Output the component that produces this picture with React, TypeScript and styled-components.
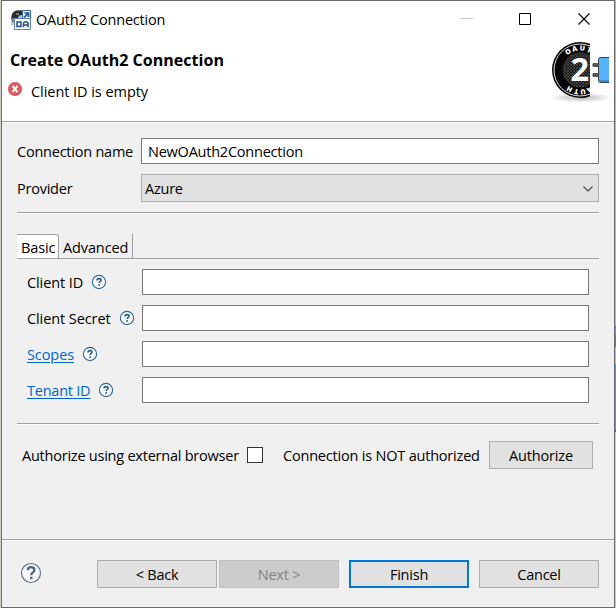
import React from 'react';
import styled, { createGlobalStyle } from 'styled-components';

const GlobalStyle = createGlobalStyle`
  * { box-sizing: border-box; }
  body {
    margin: 0;
    overflow: hidden;
    font: 14.5px/20px "Open Sans", "Noto Sans", sans-serif;
    letter-spacing: -0.23px;
    color: #000;
  }
  input, button { font: inherit; letter-spacing: inherit; color: inherit; border-radius: 0; margin: 0; outline: none; }
`;

const Desktop = styled.div`
  width: 616px;
  height: 608px;
  padding: 0 1px;
  background:
    linear-gradient(#b9b8b3 0 326px, #45608a 326px 327px, #6795cc 327px 335px, #777 335px 347px, #b9b8b3 347px 364px, #5d8fcc 364px 431px, #3d5470 431px 432px, #c9c8c3 432px) right / 1px 100% no-repeat,
    #d4d1c9;
`;

const Window = styled.main`
  display: flex;
  flex-direction: column;
  height: 608px;
  border: 1px solid #6b6b6b;
  background: #f0f0f0;
`;

const TitleBar = styled.header`
  display: flex;
  align-items: center;
  height: 37px;
  padding: 0 23px 0 9px;
  background: #fff;
`;

const Title = styled.span`
  margin-left: 5px;
  letter-spacing: -0.2px;
`;

const WindowControls = styled.div`
  display: flex;
  gap: 46px;
  margin-left: auto;
  svg { display: block; }
`;

const Banner = styled.section`
  display: flex;
  justify-content: space-between;
  height: 83px;
  padding: 0 2px 0 6px;
  background: #fff;
`;

const Heading = styled.h1`
  margin: 12px 0 0 2px;
  font-size: 16px;
  line-height: 20px;
  font-weight: 700;
  letter-spacing: 0.03px;
`;

const Message = styled.div`
  display: flex;
  align-items: center;
  gap: 9px;
  margin-top: 12px;
  letter-spacing: -0.05px;
  svg { margin-top: -6px; }
`;

const Rule = styled.hr<{ $top?: number }>`
  flex: none;
  width: 100%;
  height: 2px;
  margin: ${({ $top = 0 }) => $top}px 0 0;
  border: 0;
  border-top: 1px solid #a0a0a0;
  border-bottom: 1px solid #fff;
`;

const Content = styled.div`
  flex: 1;
  padding: 15px 15px 0;
`;

const Form = styled.div<{ $label: number }>`
  display: grid;
  grid-template-columns: ${({ $label }) => $label}px 1fr;
  row-gap: 10px;
  align-items: center;
`;

const Input = styled.input`
  width: 100%;
  height: 26px;
  padding: 0 6px;
  border: 1px solid #7a7a7a;
  background: #fff;
`;

const Select = styled.div`
  display: flex;
  align-items: center;
  justify-content: space-between;
  height: 28px;
  padding: 1px 5px 0 3px;
  border: 1px solid #adadad;
  background: #e1e1e1;
`;

const Tabs = styled.div`
  display: flex;
  height: 25px;
  margin-top: 20px;
  border-bottom: 1px solid #a0a0a0;
`;

const Tab = styled.div<{ $active?: boolean }>`
  width: ${({ $active }) => ($active ? 42 : 74)}px;
  height: 24px;
  padding: 4px 0 0 4px;
  white-space: nowrap;
  letter-spacing: -0.12px;
  border-right: 1px solid #a0a0a0;
  ${({ $active }) => $active && 'border-top: 1px solid #a0a0a0; border-top-right-radius: 3px; background: #fff; padding-top: 3px;'}
`;

const TabPanel = styled.div`
  padding: 10px 10px 0;
`;

const Label = styled.label`
  display: flex;
  align-items: center;
  gap: 8px;
  padding-top: 1px;
  white-space: nowrap;
  svg { margin-top: -2px; }
  ${TabPanel} & { letter-spacing: -0.09px; }
`;

const Link = styled.a`
  color: #0066cc;
  text-decoration: underline;
  text-underline-offset: 2px;
`;

const TightLink = styled(Link)`
  letter-spacing: -0.23px;
`;

const AuthorizeRow = styled.div`
  display: flex;
  align-items: center;
  margin-top: 16px;
  padding: 0 6px 0 5px;
  white-space: nowrap;
`;

const CheckLabel = styled.span`
  width: 225px;
  padding-top: 2px;
`;

const Status = styled.span`
  padding-top: 2px;
  letter-spacing: -0.2px;
`;

const CheckBox = styled.span`
  width: 16px;
  height: 16px;
  margin-right: 20px;
  border: 1px solid #333;
  background: #fff;
`;

const Button = styled.button<{ $width: number; $primary?: boolean }>`
  width: ${({ $width }) => $width}px;
  height: 28px;
  padding: 1px 0 0;
  border: ${({ $primary }) => ($primary ? '2px solid #0078d7' : '1px solid #adadad')};
  background: #e1e1e1;
  line-height: 20px;
  &:disabled { border-color: #bfbfbf; background: #ccc; color: #838383; }
`;

const AuthorizeButton = styled(Button)`
  margin-left: auto;
  letter-spacing: -0.15px;
`;

const Footer = styled.footer`
  display: flex;
  align-items: flex-start;
  justify-content: space-between;
  height: 66px;
  padding: 19px 15px 0 18px;
  > svg { margin-top: 2px; }
`;

const Buttons = styled.div`
  display: flex;
  gap: 10px;
`;

const Pair = styled.div`
  display: flex;
  gap: 2px;
`;

const HelpIcon = () => (
  <svg width="16" height="16" viewBox="0 0 16 16" fill="none">
    <circle cx="8" cy="8" r="6.6" fill="#fafcff" stroke="#2f6699" strokeWidth="1.1" />
    <path d="M6 6.5C6 5.2 6.8 4.6 8 4.6s2 .6 2 1.6c0 1.3-1.8 1.3-1.8 2.9" stroke="#245d94" strokeWidth="1.6" />
    <path d="M7.3 10.2h1.8v1.6H7.3z" fill="#245d94" />
  </svg>
);

const LargeHelpIcon = () => (
  <svg width="22" height="22" viewBox="0 0 22 22" fill="none">
    <circle cx="11" cy="11" r="9.5" fill="#f7f8fa" stroke="#64728f" strokeWidth="1.2" />
    <path d="M7.8 8.2C7.8 6 9.2 5.1 11.1 5.1s3.3 1 3.3 2.8c0 2.6-3.2 2.4-3.2 5.3" stroke="#526486" strokeWidth="2.3" />
    <path d="M10 14.8h2.5v2.4H10z" fill="#526486" />
  </svg>
);

const ErrorIcon = () => (
  <svg width="14" height="14" viewBox="0 0 14 14">
    <circle cx="7" cy="7" r="6.7" fill="#dc5a5e" stroke="#c8494e" strokeWidth=".6" />
    <path d="M4.5 3.8l5 6.4M9.5 3.8l-5 6.4" stroke="#fff" strokeWidth="1.9" />
  </svg>
);

const AppIcon = () => (
  <svg width="20" height="20" viewBox="0 0 20 20">
    <path d="M0 15V5l3-4 6-1h3v15z" fill="#c4c4c2" />
    <path d="M0 9l1.5-6L5 .5h7V5L8 5.500 7 8H4z" fill="#2c2c2c" />
    <path d="M1 9h3v3H1zM5 3h3v2H5z" fill="#777" />
    <path d="M11.500.5h8V10h-8z" fill="#dce8f5" stroke="#3f6ba5" />
    <path d="M13 7.500l4-4M13.500 3h4v4" stroke="#234f86" strokeWidth="1.6" fill="none" />
    <path d="M3.500 8.500h16v11h-16z" fill="#fdfdf8" stroke="#5c83b4" />
    <path d="M6 12h4v4.500H6zM12.500 17.300V13l1-1h2.500l1 1v4.300M12.500 15h4.500" fill="none" stroke="#234f86" strokeWidth="1.5" />
  </svg>
);

const ringLetters = [
  { char: 'O', angle: -33 },
  { char: 'A', angle: -14 },
  { char: 'U', angle: 6 },
  { char: 'T', angle: 25 },
  { char: 'A', angle: 154 },
  { char: 'U', angle: 172 },
  { char: 'T', angle: 190 },
  { char: 'H', angle: 209 },
];

const OAuthLogo = () => (
  <svg width="62" height="64" viewBox="0 0 62 64">
    <defs>
      <clipPath id="half"><path d="M0 0h40v64H0z" /></clipPath>
      <pattern id="mesh" width="3" height="3" patternUnits="userSpaceOnUse">
        <path d="M0 0l3 3M3 0L0 3" stroke="#555" strokeWidth=".7" />
      </pattern>
      <radialGradient id="shade"><stop stopColor="#000" stopOpacity=".3" /><stop offset="1" stopColor="#000" stopOpacity="0" /></radialGradient>
    </defs>
    <ellipse cx="31" cy="59.5" rx="30" ry="5" fill="url(#shade)" />
    <g clipPath="url(#half)">
      <circle cx="30" cy="32" r="28" fill="#050505" />
      <circle cx="30" cy="32" r="26" fill="none" stroke="#ddd" strokeWidth="1" />
      <circle cx="30" cy="32" r="17.5" fill="#141414" />
      <circle cx="30" cy="32" r="17.5" fill="url(#mesh)" />
      <g fill="#fff" fontFamily="Open Sans" fontWeight="800" fontSize="7" textAnchor="middle" letterSpacing="0">
        {ringLetters.map(({ char, angle }) => (
          <text key={angle} x="30" y="12.500" transform={`rotate(${angle} 30 32)`}>{char}</text>
        ))}
      </g>
      <text x="20.500" y="43" fill="#fff" fontFamily="Open Sans" fontWeight="700" fontSize="32" letterSpacing="0" textLength="18.500" lengthAdjust="spacingAndGlyphs">2</text>
    </g>
    <path d="M43 25h5v4h-5q-1.500-2 0-4zM43 35h5v4h-5q-1.500-2 0-4z" fill="#555" />
    <path d="M59 19.500H50.500q-2 0-2 2v21q0 2 2 2H59" fill="#58b2f8" stroke="#3b3f45" />
    <path d="M49 42h10v2H49z" fill="#3c8ed4" />
  </svg>
);

const fields = [
  { name: 'Client ID' },
  { name: 'Client Secret' },
  { name: 'Scopes', link: Link },
  { name: 'Tenant ID', link: TightLink },
];

export default function App() {
  return (
    <Desktop>
      <GlobalStyle />
      <Window>
        <TitleBar>
          <AppIcon />
          <Title>OAuth2 Connection</Title>
          <WindowControls>
            <svg width="14" height="13"><path d="M1 5.500h13" stroke="#c8c8c8" /></svg>
            <svg width="13" height="13"><path d="M.5.5h11v11H.5z" fill="none" stroke="#000" /></svg>
            <svg width="13" height="13"><path d="M.5.5l11 11M11.500.5l-11 11" stroke="#000" strokeWidth="1.1" /></svg>
          </WindowControls>
        </TitleBar>
        <Banner>
          <div>
            <Heading>Create OAuth2 Connection</Heading>
            <Message><ErrorIcon />Client ID is empty</Message>
          </div>
          <OAuthLogo />
        </Banner>
        <Rule />
        <Content>
          <Form $label={124}>
            <Label>Connection name</Label>
            <Input defaultValue="NewOAuth2Connection" />
            <Label>Provider</Label>
            <Select>
              Azure
              <svg width="10" height="6"><path d="M.5.5L5 5 9.500.5" fill="none" stroke="#444" strokeWidth="1.1" /></svg>
            </Select>
          </Form>
          <Rule $top={10} />
          <Tabs>
            <Tab $active>Basic</Tab>
            <Tab>Advanced</Tab>
          </Tabs>
          <TabPanel>
            <Form $label={115}>
              {fields.map(({ name, link: FieldLink }) => (
                <React.Fragment key={name}>
                  <Label>{FieldLink ? <FieldLink>{name}</FieldLink> : name}<HelpIcon /></Label>
                  <Input />
                </React.Fragment>
              ))}
            </Form>
          </TabPanel>
          <Rule $top={20} />
          <AuthorizeRow>
            <CheckLabel>Authorize using external browser</CheckLabel>
            <CheckBox />
            <Status>Connection is NOT authorized</Status>
            <AuthorizeButton $width={104}>Authorize</AuthorizeButton>
          </AuthorizeRow>
        </Content>
        <Rule />
        <Footer>
          <LargeHelpIcon />
          <Buttons>
            <Pair>
              <Button $width={120}>&lt; Back</Button>
              <Button $width={120} disabled>Next &gt;</Button>
            </Pair>
            <Button $width={120} $primary>Finish</Button>
            <Button $width={120}>Cancel</Button>
          </Buttons>
        </Footer>
      </Window>
    </Desktop>
  );
}
